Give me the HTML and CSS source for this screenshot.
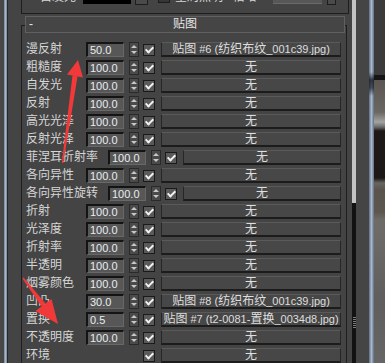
FILE: index.html
```html
<!DOCTYPE html>
<html lang="zh-CN">
<head>
<meta charset="utf-8">
<title>贴图</title>
<link rel="stylesheet" href="styles.css">
</head>
<body>
<div class="screen">
  <div class="edge-left"></div>
  <div class="panel">
    <div class="prev">
      <div class="prev-row">
        <span class="prev-lbl">自发光</span>
        <span class="swatch"></span>
        <span class="pbtn"></span>
        <span class="pcb"></span>
        <span class="prev-gi">全局照明</span>
        <span class="prev-mult">倍增</span>
        <span class="pfield"></span>
        <span class="pspin"></span>
      </div>
    </div>
    <div class="rollout">
      <div class="rollout-head"><span class="minus">-</span><span class="title">贴图</span><span></span></div>
      <div class="maps">
        <div class="row"><span class="lbl">漫反射</span><span class="field">50.0</span><span class="spin"></span><span class="cb"></span><span class="map"><span class="mt">贴图<span class="en"> #6 (</span>纺织布纹<span class="en">_001c39.jpg)</span></span></span></div>
        <div class="row"><span class="lbl">粗糙度</span><span class="field">100.0</span><span class="spin"></span><span class="cb"></span><span class="map">无</span></div>
        <div class="row"><span class="lbl">自发光</span><span class="field">100.0</span><span class="spin"></span><span class="cb"></span><span class="map">无</span></div>
        <div class="row"><span class="lbl">反射</span><span class="field">100.0</span><span class="spin"></span><span class="cb"></span><span class="map">无</span></div>
        <div class="row"><span class="lbl">高光光泽</span><span class="field">100.0</span><span class="spin"></span><span class="cb"></span><span class="map">无</span></div>
        <div class="row"><span class="lbl">反射光泽</span><span class="field">100.0</span><span class="spin"></span><span class="cb"></span><span class="map">无</span></div>
        <div class="row"><span class="lbl wide">菲涅耳折射率</span><span class="field">100.0</span><span class="spin"></span><span class="cb"></span><span class="map">无</span></div>
        <div class="row"><span class="lbl">各向异性</span><span class="field">100.0</span><span class="spin"></span><span class="cb"></span><span class="map">无</span></div>
        <div class="row"><span class="lbl wide">各向异性旋转</span><span class="field">100.0</span><span class="spin"></span><span class="cb"></span><span class="map">无</span></div>
        <div class="row"><span class="lbl">折射</span><span class="field">100.0</span><span class="spin"></span><span class="cb"></span><span class="map">无</span></div>
        <div class="row"><span class="lbl">光泽度</span><span class="field">100.0</span><span class="spin"></span><span class="cb"></span><span class="map">无</span></div>
        <div class="row"><span class="lbl">折射率</span><span class="field">100.0</span><span class="spin"></span><span class="cb"></span><span class="map">无</span></div>
        <div class="row"><span class="lbl">半透明</span><span class="field">100.0</span><span class="spin"></span><span class="cb"></span><span class="map">无</span></div>
        <div class="row"><span class="lbl">烟雾颜色</span><span class="field">100.0</span><span class="spin"></span><span class="cb"></span><span class="map">无</span></div>
        <div class="row"><span class="lbl">凹凸</span><span class="field">30.0</span><span class="spin"></span><span class="cb"></span><span class="map"><span class="mt">贴图<span class="en"> #8 (</span>纺织布纹<span class="en">_001c39.jpg)</span></span></span></div>
        <div class="row"><span class="lbl">置换</span><span class="field">0.5</span><span class="spin"></span><span class="cb"></span><span class="map"><span class="mt">贴图<span class="en"> #7 (t2-0081-</span>置换<span class="en">_0034d8.jpg)</span></span></span></div>
        <div class="row"><span class="lbl">不透明度</span><span class="field">100.0</span><span class="spin"></span><span class="cb"></span><span class="map">无</span></div>
        <div class="row"><span class="lbl solo">环境</span><span class="cb"></span><span class="map">无</span></div>
      </div>
    </div>
  </div>
  <div class="scroll"><div class="scroll-track"></div><div class="scroll-thumb"><div class="grip"></div></div></div>
  <div class="gutter"></div>
  <div class="frame"></div>
  <div class="viewport"></div>
  <svg class="annot" viewBox="0 0 385 363" width="385" height="363">
    <polygon class="arrow" points="61.8,162.9 63.3,163.1 77.5,76.4 72.5,75.6"/>
    <polygon class="arrow" points="67,74.5 83,77.5 78,60"/>
    <polygon class="arrow" points="23.6,277.5 22.4,278.5 41.5,306.4 45.5,303.4"/>
    <polygon class="arrow" points="51.5,298.9 35.5,311 58,324"/>
  </svg>
</div>
</body>
</html>
```
FILE: styles.css
```css
* { box-sizing: border-box; }
html, body { margin: 0; padding: 0; }
body {
  width: 385px;
  height: 363px;
  overflow: hidden;
  background: #444;
  font-family: "Liberation Sans", "Noto Sans CJK SC", sans-serif;
  font-size: 12px;
  color: #d8d8d8;
}
.screen { position: relative; display: flex; width: 385px; height: 363px; }

.edge-left {
  width: 8px; flex: none;
  background: linear-gradient(to right, #474747 0 4px, #74849b 4px, #a6b4c6 5.5px, #74849b 7px, #262626 7px 8px);
}
.panel { width: 344px; flex: none; background: #444; overflow: hidden; }

/* previous rollout (scrolled, mostly out of view) */
.prev {
  height: 14px;
  margin: 0 3px 0 13px;
  border: 1px solid #1e1e1e;
  border-top: 0;
  overflow: hidden;
}
.prev-row {
  display: flex; align-items: center;
  height: 16px; margin-top: -11px; padding-left: 18px;
  line-height: 16px; white-space: nowrap;
}
.prev-lbl { width: 43px; flex: none; }
.swatch { width: 48px; height: 14px; flex: none; background: #000; margin-right: 4px; }
.pbtn { width: 13px; height: 16px; flex: none; background: #4a4a4a; border: 1px solid #1e1e1e; margin-right: 10px; }
.pcb { width: 12px; height: 12px; flex: none; background: #363636; border: 1px solid #1c1c1c; margin-right: 5px; }
.prev-gi { width: 58px; flex: none; }
.prev-mult { width: 40px; flex: none; }
.pfield { width: 49px; height: 14px; flex: none; background: #575757; border-bottom: 1px solid #6a6a6a; margin-right: 5px; }
.pspin { width: 9px; height: 15px; flex: none; background: #4a4a4a; border: 1px solid #1e1e1e; }

/* maps rollout */
.rollout {
  margin: 11px 5px 0 13px;
  border: 1px solid #1e1e1e;
}
.rollout-head {
  display: grid; grid-template-columns: 1fr auto 1fr; align-items: center;
  height: 17px; margin: -10px 1px 0 3px; padding: 0 3px;
  border: 1px solid #606060; background: #454545;
  color: #e6e6e6; line-height: 15px;
}
.minus { justify-self: start; }
.title { justify-self: center; }

.maps {
  display: flex; flex-direction: column; gap: 3px;
  margin-top: 9px; padding: 0 5px 0 4px;
}
.row { display: flex; align-items: center; height: 15px; }
.lbl { width: 60px; flex: none; white-space: nowrap; line-height: 15px; color: #d6d6d6; }
.lbl.wide { width: 82px; }
.lbl.solo { width: 117px; }

.field {
  width: 38px; height: 15px; flex: none; margin-right: 5px;
  background: #575757;
  border-top: 2px solid #141414; border-left: 2px solid #141414;
  border-right: 1px solid #686868; border-bottom: 1px solid #686868;
  padding-left: 2px;
  font-size: 11px; line-height: 12px; color: #e8edf2;
}
.spin {
  width: 10px; height: 15px; flex: none; margin-right: 4px;
  display: flex; flex-direction: column; align-items: center; justify-content: center; gap: 3px;
  background: #4a4a4a; border: 1px solid #2a2a2a;
}
.spin::before, .spin::after {
  content: ""; width: 0; height: 0;
  border-left: 3px solid transparent; border-right: 3px solid transparent;
}
.spin::before { border-bottom: 3px solid #c8c8c8; }
.spin::after { border-top: 3px solid #c8c8c8; }

.cb {
  width: 12px; height: 12px; flex: none; margin-right: 6px;
  display: flex; align-items: center; justify-content: center;
  background: #5a5a5a; border: 1px solid #1a1a1a;
}
.cb::after {
  content: ""; width: 3px; height: 6px;
  border-right: 2px solid #f2f2f2; border-bottom: 2px solid #f2f2f2;
  transform: translateY(-1px) rotate(45deg);
}

.map {
  flex: 1; height: 15px; min-width: 0;
  display: flex; align-items: center; justify-content: center;
  white-space: nowrap; line-height: 12px;
  background: #474747;
  border: 1px solid #262626; border-top-color: #5a5a5a; border-bottom: 2px solid #1c1c1c;
  color: #dedede;
}
.mt { white-space: pre; }
.en { font-size: 11px; }

/* right side chrome */
.scroll { width: 4px; flex: none; display: flex; flex-direction: column; }
.scroll-track { height: 203px; background: #c4c4c4; }
.scroll-thumb { flex: 1; background: #121212; padding-top: 114px; }
.grip {
  width: 3px; height: 11px; margin-left: 1px;
  background: repeating-linear-gradient(#7a7a7a 0 1px, transparent 1px 2px);
}
.gutter { width: 13px; flex: none; background: #454545; }
.frame {
  width: 5px; flex: none;
  background:
    linear-gradient(to bottom, transparent 72px, rgba(10,12,16,.75) 80px, rgba(10,12,16,.6) 88px, transparent 96px),
    linear-gradient(to right, #5f6f86, #aab8c9 50%, #5f6f86);
}
.viewport {
  flex: 1;
  background: linear-gradient(to bottom,
    #3b3b3b 0 75px, #151515 75px 80px, #5b5651 80px, #6a6661 112px,
    #a3a3a1 122px, #6b6b6b 127px, #1e1816 131px, #1d1715 178px,
    #676563 183px, #5a534b 190px, #5d564e 212px, #6e6b67 220px,
    #6a6865 250px, #5f5e5c 300px, #666 363px);
}

.annot { position: absolute; left: 0; top: 0; width: 385px; height: 363px; pointer-events: none; }
.arrow { fill: #f2393a; }
```
